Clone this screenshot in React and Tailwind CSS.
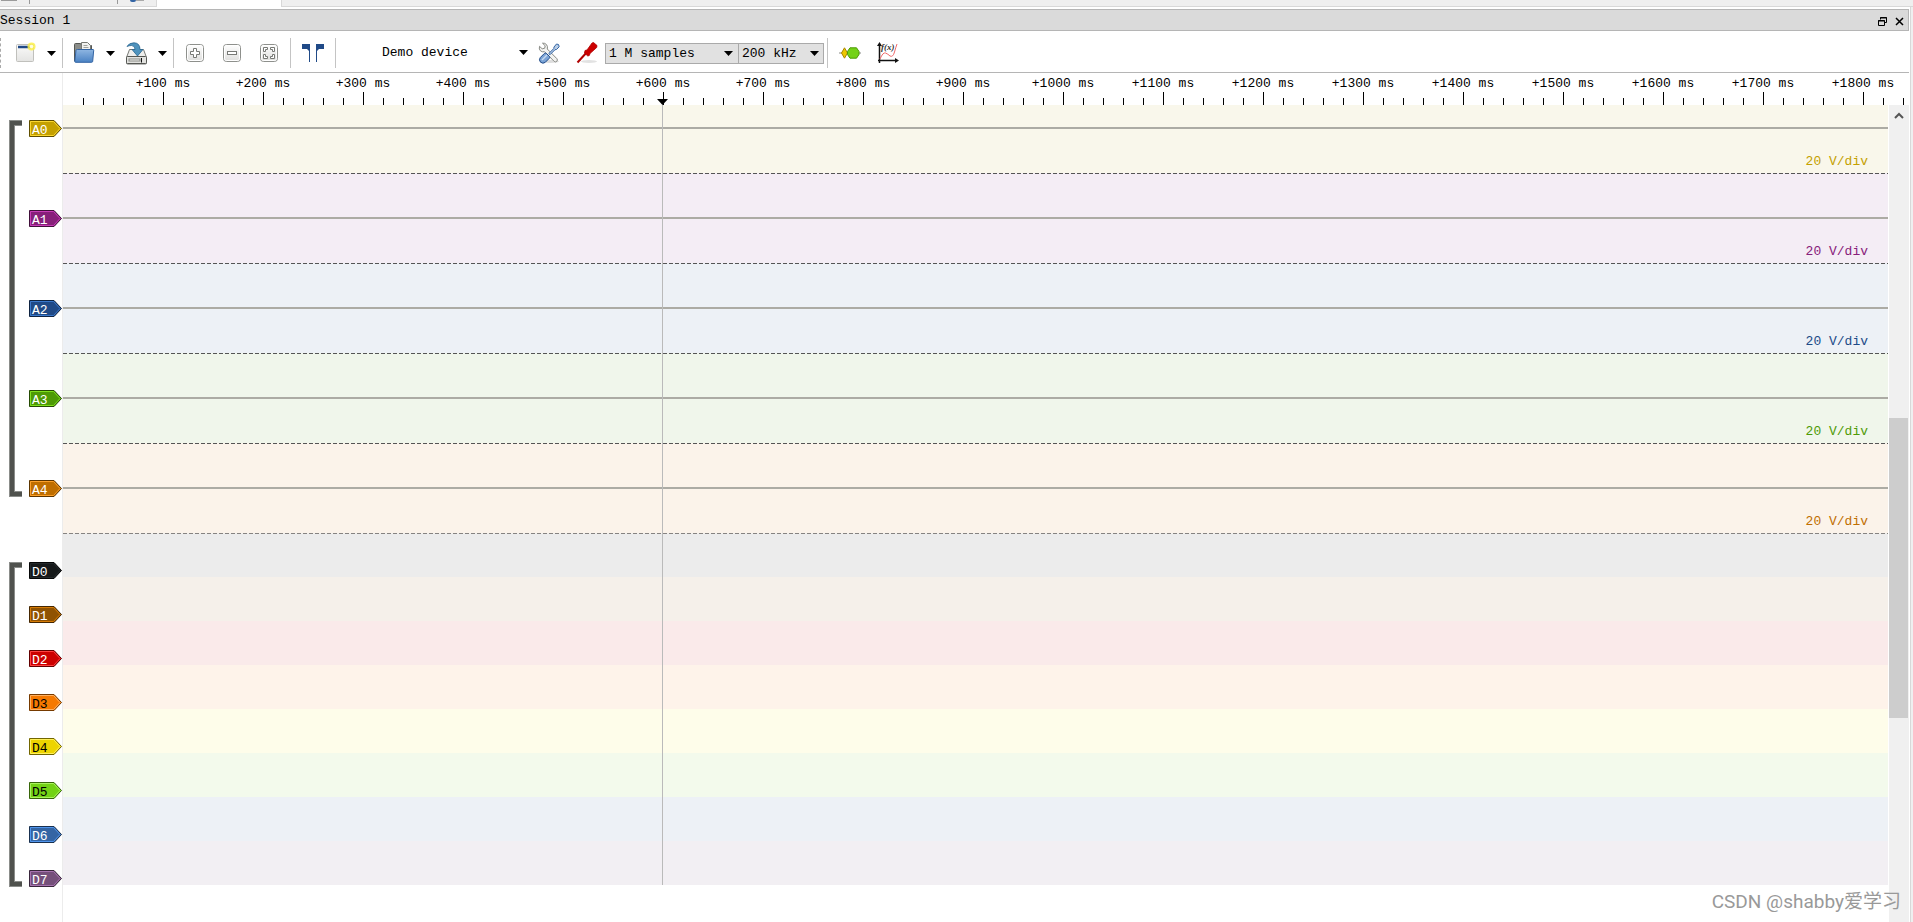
import React from 'react';

const analogChannels = [
  { name: 'A0', fill: '#c4a000', light: '#fbd72f', dark: '#5f4e00', lane: 'bg-[#f9f7eb]', height: 'h-[69px]', label: 'text-[#c4a000]', next: 'bg-[#f4edf5]' },
  { name: 'A1', fill: '#87207a', light: '#c93bb8', dark: '#3f0f39', lane: 'bg-[#f4edf5]', height: 'h-[90px]', label: 'text-[#87207a]', next: 'bg-[#edf1f6]' },
  { name: 'A2', fill: '#204a87', light: '#3a78cc', dark: '#0f2340', lane: 'bg-[#edf1f6]', height: 'h-[90px]', label: 'text-[#204a87]', next: 'bg-[#f0f6eb]' },
  { name: 'A3', fill: '#4e9a06', light: '#7fe01c', dark: '#254a03', lane: 'bg-[#f0f6eb]', height: 'h-[90px]', label: 'text-[#4e9a06]', next: 'bg-[#fbf3ea]' },
  { name: 'A4', fill: '#bf6e00', light: '#fda02a', dark: '#5c3500', lane: 'bg-[#fbf3ea]', height: 'h-[90px]', label: 'text-[#bf6e00]', next: 'bg-[#ececec] opacity-70' },
];

const digitalChannels = [
  { name: 'D0', fill: '#16191a', light: '#24292b', dark: '#060707', lane: 'bg-[#ececec]', height: 'h-[43px]' },
  { name: 'D1', fill: '#8f5202', light: '#d67b05', dark: '#452701', lane: 'bg-[#f5f0ea]', height: 'h-11' },
  { name: 'D2', fill: '#cc0000', light: '#ff4040', dark: '#620000', lane: 'bg-[#faeaea]', height: 'h-11' },
  { name: 'D3', fill: '#f57900', light: '#ffb060', dark: '#763a00', lane: 'bg-[#fef3ea]', height: 'h-11', darkText: true },
  { name: 'D4', fill: '#edd400', light: '#fff05a', dark: '#726600', lane: 'bg-[#fefdea]', height: 'h-11', darkText: true },
  { name: 'D5', fill: '#73d216', light: '#a9f45c', dark: '#37650a', lane: 'bg-[#f3faec]', height: 'h-11', darkText: true },
  { name: 'D6', fill: '#3465a4', light: '#4f94ec', dark: '#19304f', lane: 'bg-[#edf1f6]', height: 'h-11' },
  { name: 'D7', fill: '#75507b', light: '#a873b0', dark: '#38263b', lane: 'bg-[#f2eff3]', height: 'h-11' },
];

const majorTicks = Array.from({ length: 18 }, (_, i) => (i + 1) * 100);

const Caret = () => (
  <svg width="9" height="5" viewBox="0 0 9 5" aria-hidden="true">
    <path d="M0 0h9L4.5 5z" fill="#000" />
  </svg>
);

const MenuArrow = ({ label }) => (
  <button aria-label={label} className="flex h-6 w-[9px] items-center justify-center">
    <Caret />
  </button>
);

const Separator = () => <div className="h-[30px] w-px bg-[#c4c4c4]" />;

const NewIcon = () => (
  <svg width="22" height="22" viewBox="0 0 22 22">
    <defs>
      <linearGradient id="paper" x1="0" y1="0" x2="0" y2="1">
        <stop offset="0" stopColor="#fafafa" />
        <stop offset="1" stopColor="#e4e4e2" />
      </linearGradient>
    </defs>
    <rect x="1.5" y="2.5" width="17" height="17" rx="1" fill="url(#paper)" stroke="#c0c0bc" />
    <path d="M3 5h13" stroke="#204a87" strokeWidth="2.5" />
    <circle cx="16.500" cy="4.5" r="4" fill="#fcf04a" opacity=".85" />
    <circle cx="16.500" cy="4.5" r="1.8" fill="#fffde0" />
  </svg>
);

const OpenIcon = () => (
  <svg width="22" height="22" viewBox="0 0 22 22">
    <defs>
      <linearGradient id="folder" x1="0" y1="0" x2="0" y2="1">
        <stop offset="0" stopColor="#8fb6e2" />
        <stop offset="1" stopColor="#4a82c3" />
      </linearGradient>
    </defs>
    <path d="M1.5 19V2.5q0-1 1-1h5l1.500 2h9.500V19z" fill="#8b8d89" stroke="#555753" />
    <path d="M8.500 10V.5h6l3 3V10z" fill="#f2f2f0" stroke="#777974" />
    <path d="M10.500 3.5h4M10.500 5.500h5" stroke="#a0a29d" />
    <path d="M4.500 7.500h15.500q.8 0 .7.8l-1 11q-.1 1-1 1H2.500q-.8 0-.7-1l1.200-11q.1-.8 1.500-.8z" fill="url(#folder)" stroke="#3465a4" />
  </svg>
);

const SaveIcon = () => (
  <svg width="23" height="23" viewBox="0 0 23 23">
    <path d="M4.500 7.500h14l3 8v5.500q0 1-1 1h-18q-1 0-1-1v-5.500z" fill="#eeeeec" stroke="#777974" />
    <rect x="1.500" y="14.500" width="20" height="7" rx="1" fill="#e2e2df" stroke="#555753" />
    <path d="M3.500 18h12" stroke="#888a85" strokeWidth="3" />
    <path d="M4.500 18h10" stroke="#f4f4f2" />
    <path d="M16.500 16v4.500" stroke="#111" />
    <path d="M2 4.500Q4 .8 9 .8q6 .2 6 6.700h3L12.500 14 7 7.500h3q0-4-3.500-4Q4 3.500 2 4.500z" fill="#4f93bd" stroke="#2a6690" strokeWidth=".8" />
  </svg>
);

const ZoomBox = ({ children }) => (
  <svg width="20" height="20" viewBox="0 0 20 20">
    <defs>
      <linearGradient id="key" x1="0" y1="0" x2="0" y2="1">
        <stop offset="0" stopColor="#fff" />
        <stop offset="1" stopColor="#dededc" />
      </linearGradient>
    </defs>
    <rect x="1.500" y="1.500" width="17" height="17" rx="3" fill="url(#key)" stroke="#8e908c" />
    <rect x="2.500" y="2.500" width="15" height="15" rx="2" fill="none" stroke="#fff" />
    {children}
  </svg>
);

const ZoomInIcon = () => (
  <ZoomBox>
    <path d="M8.500 5.500h3v3h3v3h-3v3h-3v-3h-3v-3h3z" fill="#fff" stroke="#777975" />
  </ZoomBox>
);

const ZoomOutIcon = () => (
  <ZoomBox>
    <rect x="5.500" y="8.500" width="9" height="3" fill="#fff" stroke="#777975" />
  </ZoomBox>
);

const ZoomFitIcon = () => (
  <ZoomBox>
    <path
      d="M4.500 4.500h4v2h-2v2h-2zM11.500 4.500h4v4h-2v-2h-2zM4.500 11.500h2v2h2v2h-4zM13.500 11.500h2v4h-4v-2h2z"
      fill="#fff"
      stroke="#777975"
    />
  </ZoomBox>
);

const CursorsIcon = () => (
  <svg width="22" height="18" viewBox="0 0 22 18">
    <path d="M0 0h8v18H7V7L5 5H0zM22 0h-8v18h1V7l2-2h5z" fill="#204a87" />
  </svg>
);

const ConfigureIcon = () => (
  <svg width="22" height="22" viewBox="0 0 22 22">
    <ellipse cx="12" cy="19.500" rx="9" ry="1.500" fill="#ddd" />
    <path
      d="M4.500 1.200l2.700 2.600-.5 2.400-2.500.6L1.500 4.300q-.8 3 1 4.600 1.700 1.400 4 .8l9.700 9.700q1.300 1.100 2.600-.1 1.200-1.300.1-2.600L9.300 7q.7-2.600-.8-4.400Q6.900.8 4.500 1.200z"
      fill="#f2f2f0"
      stroke="#888a85"
    />
    <path d="M20.500 2.500l-2-.5-2.500 3-.2 1.500-5 5 1.200 1.200 5-5 1.500-.2 2.700-2.700z" fill="#b9cde6" stroke="#3465a4" />
    <path d="M8.500 11.500l3 3q.6 1-.3 1.900l-4 4q-2.200 1.700-4.700-.2-2-2.500-.2-4.700l4-4q1-.9 2.200 0z" fill="#7aa3d6" stroke="#204a87" />
    <path d="M4 18l5-5" stroke="#c6d9ef" strokeWidth="1.500" />
  </svg>
);

const ProbeIcon = () => (
  <svg width="22" height="22" viewBox="0 0 22 22">
    <ellipse cx="13" cy="19.500" rx="8" ry="1.500" fill="#e2e2e2" />
    <path d="M1.500 20.500l10-11" stroke="#b00000" strokeWidth="2" />
    <path d="M9 8.500l2-.5 5-7 1.500-.5 3.500 3-.3 2-6.700 6-.7 2-1.500.5L8.500 11z" fill="#cc0000" stroke="#b00000" strokeWidth=".8" />
  </svg>
);

const DecoderIcon = () => (
  <svg width="22" height="12" viewBox="0 0 22 12">
    <path d="M0 6h22" stroke="#888a85" />
    <path d="M5.500.8L8.500 6l-3 5.200L2.500 6z" fill="#edc700" stroke="#a88600" />
    <path d="M11 .8h6.500L20 4.500v3l-2.500 3.700H11L8.500 7.500v-3z" fill="#73d216" stroke="#4e9a06" />
  </svg>
);

const MathIcon = () => (
  <svg width="22" height="22" viewBox="0 0 22 22">
    <path d="M2.500 21V3M1 18.500h18" stroke="#111" strokeWidth="1.500" fill="none" />
    <path d="M2.500 0l2.500 4H0zM22 18.500l-4-2.500v5z" fill="#111" />
    <path d="M3 17q3-7 5.500-6t4.500 3q3 1.500 4.500-4T20 2" stroke="#f06a6a" fill="none" />
    <text x="4" y="8" fontFamily="Liberation Serif, serif" fontSize="9" fontStyle="italic" fontWeight="bold" fill="#333">f(x)</text>
  </svg>
);

const FlagTag = ({ channel }) => (
  <svg width="33" height="17" viewBox="0 0 33 17" role="img" aria-label={channel.name}>
    <path d="M.5.500h24.500l7.500 8-7.500 8H.5z" fill={channel.fill} stroke={channel.dark} />
    <path d="M1.500 1.500h23l6.500 7-6.500 7h-23z" fill="none" stroke={channel.light} />
    <text x="3" y="14" fontFamily="Liberation Mono, monospace" fontSize="13" fill={channel.darkText ? '#000' : '#fff'}>
      {channel.name}
    </text>
  </svg>
);

const Bracket = ({ height }) => {
  const path = `M13 3H3V${height - 3}H13`;
  return (
    <svg width="13" height={height} className="shrink-0">
      <path d={path} fill="none" stroke="#8b8d8a" strokeWidth="6" />
      <path d={path} fill="none" stroke="#50524e" strokeWidth="4" />
    </svg>
  );
};

const ToolSelect = ({ label, value, frame, arrow }) => (
  <div className={`relative ${frame}`}>
    <select aria-label={label} className="h-full w-full appearance-none pl-[3px] outline-none" defaultValue={value}>
      <option>{value}</option>
    </select>
    <span className={`pointer-events-none absolute top-[7px] flex ${arrow}`}>
      <Caret />
    </span>
  </div>
);

const TopStrip = () => (
  <div className="flex h-[7px] items-stretch overflow-hidden">
    <div className="flex w-[157px] items-start border-r border-b border-[#d8d8d8] bg-[#efefef]">
      <div className="ml-px h-px w-4 bg-[#9a9a9a]" />
      <div className="ml-3 h-1 w-px bg-[#999]" />
      <div className="ml-[87px] h-1 w-px bg-[#999]" />
      <div className="ml-3 h-[2px] w-[6px] rounded-b bg-[#3465a4]" />
      <div className="h-px w-2 bg-[#aaa]" />
    </div>
    <div className="w-[124px] bg-white" />
    <div className="flex-1 border-b border-l border-[#d8d8d8] bg-[#efefef]" />
  </div>
);

const TitleBar = () => (
  <div className="flex h-[22px] items-center justify-between border-y border-r border-[#b5b5b5] bg-[#dadada] pt-[2px] pr-1">
    <h1>Session 1</h1>
    <div className="flex items-center gap-2">
      <button aria-label="Float">
        <svg width="9" height="9" viewBox="0 0 9 9">
          <path d="M2.500 2.500v-2h6v5h-2M2 1h7M.5 3.500h6v5h-6zM0 4h7" fill="none" stroke="#000" />
        </svg>
      </button>
      <button aria-label="Close">
        <svg width="9" height="9" viewBox="0 0 9 9">
          <path d="M1 1l7 7M8 1L1 8" stroke="#000" strokeWidth="1.500" />
        </svg>
      </button>
    </div>
  </div>
);

const Toolbar = () => (
  <div className="flex h-[42px] items-center border-b border-[#b5b5b5] pt-[3px]">
    <div className="h-[30px] border-l border-dashed border-[#aaa]" />
    <button aria-label="New session" className="ml-[14px]"><NewIcon /></button>
    <div className="ml-[10px] flex"><MenuArrow label="New menu" /></div>
    <div className="ml-[6px]"><Separator /></div>
    <button aria-label="Open" className="ml-[10px]"><OpenIcon /></button>
    <div className="ml-[11px] flex"><MenuArrow label="Open menu" /></div>
    <button aria-label="Save" className="ml-[10px]"><SaveIcon /></button>
    <div className="ml-[10px] flex"><MenuArrow label="Save menu" /></div>
    <div className="ml-[6px]"><Separator /></div>
    <div className="mx-[11px] flex gap-[17px]">
      <button aria-label="Zoom in"><ZoomInIcon /></button>
      <button aria-label="Zoom out"><ZoomOutIcon /></button>
      <button aria-label="Zoom to fit"><ZoomFitIcon /></button>
    </div>
    <Separator />
    <button aria-label="Show cursors" className="mx-[11px]"><CursorsIcon /></button>
    <Separator />
    <ToolSelect label="Device" value="Demo device" frame="ml-[43px] h-[21px] w-[151px]" arrow="right-[2px]" />
    <div className="ml-2 flex gap-4">
      <button aria-label="Configure device"><ConfigureIcon /></button>
      <button aria-label="Channels"><ProbeIcon /></button>
    </div>
    <ToolSelect label="Sample count" value="1 M samples" frame="ml-[7px] h-[21px] w-[134px] border border-[#aaa] bg-[#e1e1e1]" arrow="right-[5px]" />
    <ToolSelect label="Sample rate" value="200 kHz" frame="h-[21px] w-[85px] border border-l-0 border-[#aaa] bg-[#e1e1e1]" arrow="right-[4px]" />
    <div className="ml-[3px]"><Separator /></div>
    <div className="ml-[11px] flex items-center gap-4">
      <button aria-label="Add protocol decoder"><DecoderIcon /></button>
      <button aria-label="Add math signal"><MathIcon /></button>
    </div>
  </div>
);

const Ruler = () => (
  <div className="flex h-8 overflow-hidden">
    <div className="w-[63px] shrink-0 border-r border-[#ececec]" />
    <div className="flex shrink-0 items-end pl-5">
      <div className="h-[7px] w-5 border-l border-black" />
      <div className="h-[7px] w-5 border-l border-black" />
    </div>
    {majorTicks.map((ms) => (
      <div key={ms} className="flex w-[100px] shrink-0 flex-col justify-between">
        <div className="h-[19px] w-20 text-center leading-[21px] whitespace-nowrap">+{ms} ms</div>
        <div className="flex items-end">
          <div className="h-[7px] w-5 border-l border-black" />
          <div className="h-[7px] w-5 border-l border-black" />
          <div className="h-[13px] w-5 border-l border-black" />
          <div className="h-[7px] w-5 border-l border-black" />
          <div className="h-[7px] w-5 border-l border-black" />
        </div>
      </div>
    ))}
  </div>
);

const AnalogLane = ({ channel }) => (
  <div className={`flex flex-col justify-end ${channel.height} ${channel.lane}`}>
    <div className="h-[2px] bg-[#acaba4]" />
    <div className={`flex h-11 items-end justify-end pr-5 pb-[3px] leading-4 ${channel.label}`}>20 V/div</div>
    <div className={channel.next}>
      <div className="h-px bg-[repeating-linear-gradient(90deg,#555_0_4px,transparent_4px_6px)]" />
    </div>
  </div>
);

const TraceView = () => (
  <div className="relative min-w-0 flex-1">
    <section className="flex items-start">
      <div className="flex w-[63px] shrink-0 gap-[7px] pt-[15px] pl-[9px]">
        <Bracket height={377} />
        <div className="flex flex-col gap-[73px]">
          {analogChannels.map((channel) => <FlagTag key={channel.name} channel={channel} />)}
        </div>
      </div>
      <div className="flex-1">
        {analogChannels.map((channel) => <AnalogLane key={channel.name} channel={channel} />)}
      </div>
    </section>
    <section className="flex items-start">
      <div className="flex w-[63px] shrink-0 gap-[7px] pt-7 pl-[9px]">
        <Bracket height={325} />
        <div className="flex flex-col gap-[27px]">
          {digitalChannels.map((channel) => <FlagTag key={channel.name} channel={channel} />)}
        </div>
      </div>
      <div className="flex-1">
        {digitalChannels.map((channel) => (
          <div key={channel.name} className={`${channel.height} ${channel.lane}`} />
        ))}
      </div>
    </section>
    {/* edge between the channel header and the traces */}
    <div className="absolute inset-y-0 left-[62px] w-px bg-[#ececec]" />
    {/* time marker */}
    <div className="absolute -top-[6px] left-[657px] flex flex-col items-center">
      <svg width="11" height="6" viewBox="0 0 11 6">
        <path d="M0 0h11L5.500 6z" fill="#000" />
      </svg>
      <div className="h-[780px] w-px bg-[#bababa]" />
    </div>
  </div>
);

const ScrollBar = () => (
  <div className="ml-px flex w-5 flex-col items-center bg-[#f0f0f0]">
    <button aria-label="Scroll up" className="flex h-[21px] items-center">
      <svg width="10" height="8" viewBox="0 0 10 8">
        <path d="M1 6l4-4 4 4" fill="none" stroke="#555" strokeWidth="2" />
      </svg>
    </button>
    <div className="mt-[292px] mr-px h-[300px] w-[19px] bg-[#cdcdcd]" />
  </div>
);

const App = () => (
  <div className="relative flex min-h-screen flex-col bg-[#efefef] font-['Liberation_Mono','Noto_Sans_CJK_SC',monospace] text-[13px] text-black">
    <TopStrip />
    <main className="mr-[2px] flex flex-1 flex-col border-r border-[#d8d8d8] bg-white pt-[2px] pr-px">
      <TitleBar />
      <Toolbar />
      <Ruler />
      <div className="flex flex-1">
        <TraceView />
        <ScrollBar />
      </div>
    </main>
    <div className="absolute right-3 bottom-2 font-['Roboto','Noto_Sans_CJK_SC',sans-serif] text-[19px] leading-6 text-[#999]">
      CSDN @shabby爱学习
    </div>
  </div>
);

export default App;
